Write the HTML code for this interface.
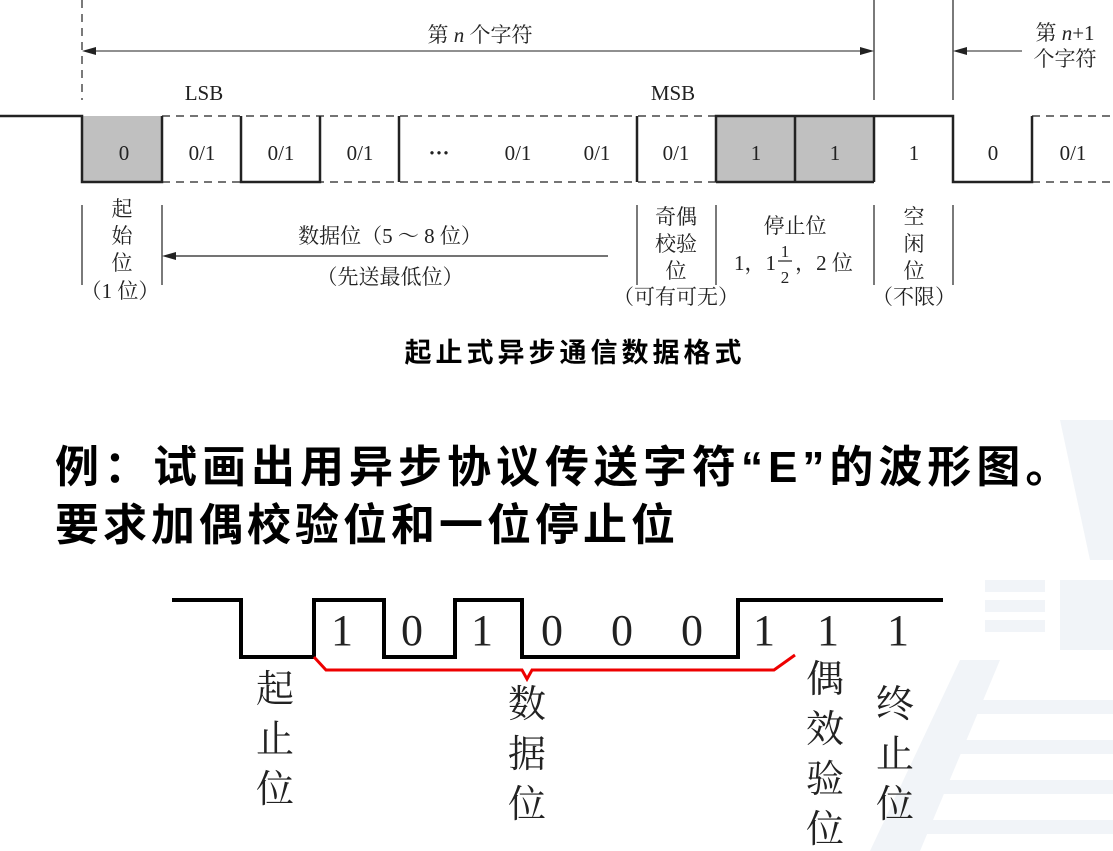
<!DOCTYPE html>
<html><head><meta charset="utf-8"><style>
html,body{margin:0;padding:0;background:#fff;width:1113px;height:851px;overflow:hidden}
svg{display:block}
.s{font-family:"Liberation Serif","Noto Serif CJK SC",serif;fill:#222}
.b{font-family:"Liberation Sans","Noto Sans CJK SC",sans-serif;font-weight:bold;fill:#000}
</style></head><body>
<svg width="1113" height="851" viewBox="0 0 1113 851">
<!-- watermark -->
<g fill="#f1f4f8">
<rect x="985" y="580" width="60" height="12"/><rect x="985" y="600" width="60" height="12"/><rect x="985" y="620" width="60" height="12"/>
<rect x="1060" y="580" width="53" height="70"/>
<polygon points="870,851 960,660 1000,660 920,851"/>
<rect x="960" y="700" width="153" height="14"/><rect x="945" y="740" width="168" height="14"/><rect x="930" y="780" width="183" height="14"/><rect x="915" y="820" width="198" height="14"/>
<polygon points="1060,420 1113,420 1113,560 1090,560"/>
</g>
<!-- top diagram -->
<g stroke="#222" fill="none">
<line x1="82" y1="0" x2="82" y2="100" stroke-dasharray="8,6" stroke-width="1.2"/>
<line x1="874" y1="0" x2="874" y2="100" stroke-width="1.2"/>
<line x1="953" y1="0" x2="953" y2="100" stroke-width="1.2"/>
<line x1="86" y1="51" x2="870" y2="51" stroke-width="1"/>
<line x1="957" y1="51" x2="1022" y2="51" stroke-width="1"/>
<line x1="162" y1="116" x2="716" y2="116" stroke-dasharray="8,6" stroke-width="1.2"/>
<line x1="162" y1="182" x2="716" y2="182" stroke-dasharray="8,6" stroke-width="1.2"/>
<line x1="1032" y1="116" x2="1113" y2="116" stroke-dasharray="8,6" stroke-width="1.2"/>
<line x1="1032" y1="182" x2="1113" y2="182" stroke-dasharray="8,6" stroke-width="1.2"/>
</g>
<g fill="#222">
<polygon points="82,51 96,47 96,55"/><polygon points="874,51 860,47 860,55"/><polygon points="953,51 967,47 967,55"/>
<polygon points="162,256 176,252 176,260"/>
</g>
<rect x="82" y="116" width="80" height="66" fill="#c0c0c0"/>
<rect x="716" y="116" width="158" height="66" fill="#c0c0c0"/>
<g stroke="#222" fill="none" stroke-width="2.5">
<polyline points="0,116 82,116 82,182 162,182 162,116"/>
<polyline points="241,116 241,182 320,182 320,116"/>
<line x1="399" y1="116" x2="399" y2="182"/>
<line x1="637" y1="116" x2="637" y2="182"/>
<polyline points="716,182 716,116 953,116 953,182 1032,182 1032,116"/>
<line x1="716" y1="182" x2="874" y2="182"/>
<line x1="795" y1="116" x2="795" y2="182"/>
<line x1="874" y1="116" x2="874" y2="182"/>
</g>
<g stroke="#222" stroke-width="1.2">
<line x1="82" y1="205" x2="82" y2="285"/><line x1="162" y1="205" x2="162" y2="285"/>
<line x1="637" y1="205" x2="637" y2="285"/><line x1="716" y1="205" x2="716" y2="285"/>
<line x1="874" y1="205" x2="874" y2="285"/><line x1="953" y1="205" x2="953" y2="285"/>
<line x1="176" y1="256" x2="608" y2="256"/>
<line x1="778" y1="261" x2="792" y2="261"/>
</g>
<g class="s" font-size="21" text-anchor="middle">
<text x="480" y="42">第 <tspan font-style="italic">n</tspan> 个字符</text>
<text x="1065" y="40">第 <tspan font-style="italic">n</tspan>+1</text>
<text x="1065" y="66">个字符</text>
<text x="204" y="100">LSB</text><text x="673" y="100">MSB</text>
<text x="124" y="160">0</text><text x="202" y="160">0/1</text><text x="281" y="160">0/1</text><text x="360" y="160">0/1</text><text x="439" y="160" font-weight="bold">···</text><text x="518" y="160">0/1</text><text x="597" y="160">0/1</text><text x="676" y="160">0/1</text><text x="756" y="160">1</text><text x="835" y="160">1</text><text x="914" y="160">1</text><text x="993" y="160">0</text><text x="1073" y="160">0/1</text>
<text x="122" y="216">起</text><text x="122" y="243">始</text><text x="122" y="270">位</text><text x="120" y="298">（1 位）</text>
<text x="390" y="243">数据位（5 ～ 8 位）</text><text x="390" y="284">（先送最低位）</text>
<text x="676" y="224">奇偶</text><text x="676" y="251">校验</text><text x="676" y="278">位</text><text x="676" y="304">（可有可无）</text>
<text x="795" y="233">停止位</text>
<text x="755" y="270">1，1</text><text x="785" y="257" font-size="17">1</text><text x="785" y="283" font-size="17">2</text><text x="824" y="270">，2 位</text>
<text x="914" y="224">空</text><text x="914" y="251">闲</text><text x="914" y="278">位</text><text x="914" y="304">（不限）</text>
</g>
<text class="b" x="575" y="362" font-size="27" letter-spacing="4" text-anchor="middle">起止式异步通信数据格式</text>
<text class="b" x="55" y="482" font-size="44" letter-spacing="5">例：试画出用异步协议传送字符“E”的波形图。</text>
<text class="b" x="55" y="540" font-size="44" letter-spacing="4">要求加偶校验位和一位停止位</text>
<!-- bottom waveform -->
<polyline points="172,600 241,600 241,657 314,657 314,600 384,600 384,657 455,657 455,600 522,600 522,657 738,657 738,600 943,600" fill="none" stroke="#000" stroke-width="4"/>
<polyline points="314,657 326,670 522,670 527,679 532,670 774,670 795,655" fill="none" stroke="#e00" stroke-width="3"/>
<g class="s" font-size="44" text-anchor="middle" fill="#111">
<text x="342" y="645">1</text><text x="412" y="645">0</text><text x="482" y="645">1</text><text x="552" y="645">0</text><text x="622" y="645">0</text><text x="692" y="645">0</text><text x="764" y="645">1</text><text x="828" y="645">1</text><text x="898" y="645">1</text>
</g>
<g class="s" font-size="38" text-anchor="middle" fill="#111">
<text x="275" y="702">起</text><text x="275" y="752">止</text><text x="275" y="802">位</text>
<text x="527" y="717">数</text><text x="527" y="767">据</text><text x="527" y="817">位</text>
<text x="825" y="692">偶</text><text x="825" y="742">效</text><text x="825" y="792">验</text><text x="825" y="842">位</text>
<text x="895" y="717">终</text><text x="895" y="767">止</text><text x="895" y="817">位</text>
</g>
</svg>
</body></html>
